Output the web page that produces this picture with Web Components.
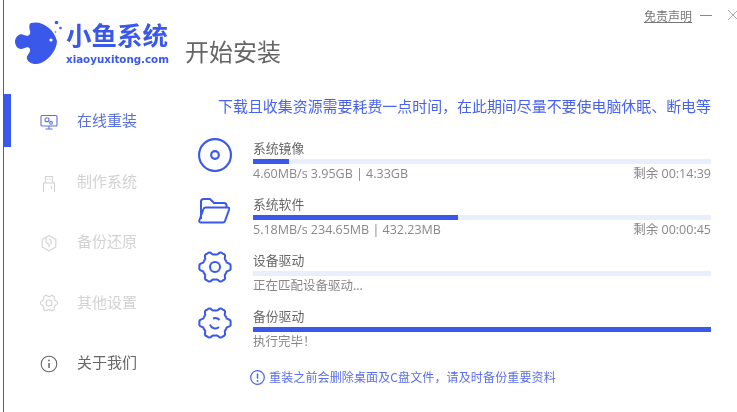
<!DOCTYPE html>
<html lang="zh">
<head>
<meta charset="utf-8">
<title>小鱼系统</title>
<style>
html, body { margin: 0; padding: 0; background: #fff; overflow: hidden; }
</style>
</head>
<body>
<install-app>
  <brand-logo slot="logo"></brand-logo>

  <nav-item slot="nav" active label="在线重装">
    <svg viewBox="0 0 18 18" width="18" height="18" fill="none" stroke="currentColor" stroke-width="1.1">
      <rect x="1" y="2.5" width="16" height="10.5" rx="1"/>
      <circle cx="7" cy="6.8" r="2"/><circle cx="11" cy="9.8" r="1.4"/>
      <path d="M9 13v3M5.5 16h7"/>
    </svg>
  </nav-item>
  <nav-item slot="nav" label="制作系统" muted>
    <svg viewBox="0 0 18 18" width="18" height="18" fill="none" stroke="currentColor" stroke-width="1.1">
      <path d="M5.500 2.500h7V9h-7zM3.500 9h11v10h-11z"/><path d="M7.800 4.500v1.500M10.200 4.500v1.500M11.500 12v3"/>
    </svg>
  </nav-item>
  <nav-item slot="nav" label="备份还原" muted>
    <svg viewBox="0 0 18 18" width="18" height="18" fill="none" stroke="currentColor" stroke-width="1.1">
      <path d="M6 3.200 9 1.500l6.800 3.800v7.600L9 16.900l-6.800-3.900V5.600L6 3.200z"/>
      <path d="M6 3.200v5.200l3 1.800v3M11.200 6.400v4M9 5l2.200 1.400"/>
    </svg>
  </nav-item>
  <nav-item slot="nav" label="其他设置" muted>
    <gear-icon size="18" width="1.1" inner="3"></gear-icon>
  </nav-item>
  <nav-item slot="nav" label="关于我们" about>
    <svg viewBox="0 0 18 18" width="18" height="18" fill="none" stroke="currentColor" stroke-width="1.1">
      <circle cx="9" cy="9" r="7.800"/>
      <path d="M9 8v5" stroke-width="1.500"/><circle cx="9" cy="5.400" r=".9" fill="currentColor" stroke="none"/>
    </svg>
  </nav-item>

  <progress-row slot="rows" label="系统镜像" stats="4.60MB/s 3.95GB | 4.33GB" remain="剩余 00:14:39" value="36">
    <svg slot="icon" viewBox="0 0 32 32" width="34" height="34" fill="none" stroke="currentColor" stroke-width="2">
      <circle cx="16" cy="16" r="15"/><circle cx="16" cy="16" r="3.600"/>
    </svg>
  </progress-row>
  <progress-row slot="rows" label="系统软件" stats="5.18MB/s 234.65MB | 432.23MB" remain="剩余 00:00:45" value="205">
    <svg slot="icon" viewBox="0 0 32 26" width="32" height="26" fill="none" stroke="currentColor" stroke-width="2" stroke-linejoin="round">
      <path d="M3 21V3.500C3 2 4 1 5.500 1h6.500l4 4h10c1.500 0 2.500 1 2.500 2.500V9"/>
      <path d="M7.500 9.500H30c1 0 1.500.8 1.200 1.800L27 23c-.3.900-1 1.500-2 1.500H3c-1.300 0-2-1-1.700-2L5.500 11c.3-1 1-1.500 2-1.500z"/>
    </svg>
  </progress-row>
  <progress-row slot="rows" label="设备驱动" stats="正在匹配设备驱动..." value="0">
    <gear-icon slot="icon" size="34" width="2" inner="5"></gear-icon>
  </progress-row>
  <progress-row slot="rows" label="备份驱动" stats="执行完毕！" value="458">
    <gear-icon slot="icon" size="34" width="2" inner="5" broken></gear-icon>
  </progress-row>
</install-app>

<script>
class GearIcon extends HTMLElement {
  connectedCallback() {
    const size = +this.getAttribute('size');
    const c = size / 2;
    const R = size * 0.415, a = size * 0.055;
    let d = '';
    // wavy six lobe outline, second harmonic flattens the lobes
    for (let i = 0; i <= 180; i++) {
      const t = i / 180 * Math.PI * 2;
      const r = R + a * Math.cos(6 * t) - a * 0.22 * Math.cos(18 * t);
      d += (i ? 'L' : 'M') + (c + r * Math.cos(t)).toFixed(2) + ' ' + (c + r * Math.sin(t)).toFixed(2);
    }
    const inner = +this.getAttribute('inner');
    const w = this.getAttribute('width');
    // broken gear: two short arcs of the inner ring
    const middle = this.hasAttribute('broken')
      ? `<path d="M${c - 5} ${c + 1.500}a5.500 5.500 0 0 0 9 2.500M${c + 4.500} ${c - 3}a5.500 5.500 0 0 0 -6.500 -1.500"/>`
      : `<circle cx="${c}" cy="${c}" r="${inner}"/>`;
    this.attachShadow({ mode: 'open' }).innerHTML = `
      <style>:host { display: block; width: ${size}px; height: ${size}px; } svg { display: block; }</style>
      <svg viewBox="0 0 ${size} ${size}" width="${size}" height="${size}" fill="none" stroke="currentColor" stroke-width="${w}">
        <path d="${d}Z" stroke-linejoin="round"/>${middle}
      </svg>`;
  }
}
customElements.define('gear-icon', GearIcon);

const logoTemplate = document.createElement('template');
logoTemplate.innerHTML = `
<style>
:host { display: flex; height: 91px; padding: 20px 0 0 10px; box-sizing: border-box; color: #3a58ea; font-family: "Noto Sans CJK SC", sans-serif; }
svg { flex: none; display: block; }
.words { filter: blur(.3px); }
.name { font-family: "Liberation Sans", "Noto Sans CJK SC", sans-serif; font-size: 25.500px; font-weight: 700; line-height: 29px; height: 31px; padding-top: 2px; white-space: nowrap; }
.url { font-family: "DejaVu Sans", sans-serif; font-size: 10.300px; font-weight: 700; line-height: 12px; white-space: nowrap; }
</style>
<svg viewBox="0 0 52 48" width="52" height="48">
  <path fill="currentColor" d="M17 3C28 0 40 9 43 21 43 29 36 39 27 43 22 45 15 44 13 39 12 35 17 33 16 29 14 25 10 29 7 29 3 29 1 25 1 21 2 16 6 13 10 15 14 17 17 15 16 11 15 7 15 4 17 3Z"/>
  <circle cx="37" cy="20" r="1.600" fill="#fff"/>
  <circle cx="42.500" cy="2.500" r="1.800" fill="currentColor"/>
  <circle cx="46.500" cy="8" r="1.300" fill="currentColor"/>
  <circle cx="41.500" cy="12" r=".8" fill="currentColor"/>
</svg>
<div class="words">
  <div class="name">小鱼系统</div>
  <div class="url">xiaoyuxitong.com</div>
</div>`;

class BrandLogo extends HTMLElement {
  constructor() {
    super();
    this.attachShadow({ mode: 'open' }).appendChild(logoTemplate.content.cloneNode(true));
  }
}
customElements.define('brand-logo', BrandLogo);

const navTemplate = document.createElement('template');
navTemplate.innerHTML = `
<style>
:host { display: flex; align-items: center; height: 60.500px; padding-left: 36px; position: relative; color: #5a70dc; }
:host([muted]) { color: #d2d2d2; }
:host([about]) { color: #666; }
:host([active])::before { content: ""; position: absolute; left: 0; top: 3px; width: 7px; height: 53px; background: #3a58ea; }
.icon { width: 18px; height: 18px; flex: none; display: block; }
.label { margin: -2px 0 0 19px; font-size: 15px; line-height: 20px; white-space: nowrap; filter: blur(.3px); }
</style>
<div class="icon"><slot></slot></div>
<span class="label"></span>`;

class NavItem extends HTMLElement {
  constructor() {
    super();
    this.attachShadow({ mode: 'open' }).appendChild(navTemplate.content.cloneNode(true));
    this.shadowRoot.querySelector('.label').textContent = this.getAttribute('label');
  }
}
customElements.define('nav-item', NavItem);

const rowTemplate = document.createElement('template');
rowTemplate.innerHTML = `
<style>
:host { display: flex; height: 56px; color: #3a58ea; }
.icon { width: 67px; flex: none; padding: 0 0 0 12px; box-sizing: border-box; height: 34px; margin-top: -1px; display: flex; align-items: center; }
.body { width: 458px; flex: none; }
.label { font-size: 12.800px; line-height: 18px; height: 20px; color: #666; filter: blur(.3px); }
.track { height: 5px; background: #e8eefb; }
.fill { height: 100%; background: #3a58ea; }
.info { display: flex; justify-content: space-between; font-family: "Open Sans", "Noto Sans CJK SC", sans-serif; font-size: 12.500px; line-height: 20px; color: #888; white-space: nowrap; filter: blur(.3px); }
</style>
<div class="icon"><slot name="icon"></slot></div>
<div class="body">
  <div class="label"></div>
  <div class="track"><div class="fill"></div></div>
  <div class="info"><span class="stats"></span><span class="remain"></span></div>
</div>`;

class ProgressRow extends HTMLElement {
  constructor() {
    super();
    this.attachShadow({ mode: 'open' }).appendChild(rowTemplate.content.cloneNode(true));
    const root = this.shadowRoot;
    root.querySelector('.label').textContent = this.getAttribute('label');
    root.querySelector('.stats').textContent = this.getAttribute('stats');
    root.querySelector('.remain').textContent = this.getAttribute('remain') || '';
    root.querySelector('.fill').style.width = this.getAttribute('value') + 'px';
  }
}
customElements.define('progress-row', ProgressRow);

const appTemplate = document.createElement('template');
appTemplate.innerHTML = `
<style>
:host { display: flex; width: 737px; height: 412px; overflow: hidden; padding-left: 3px; box-sizing: border-box; background: #fff;
  font-family: "Noto Sans CJK SC", "Noto Sans", sans-serif; }
.side { width: 183px; flex: none; box-sizing: border-box; border-left: 1px solid #3a58ea; }
.main { flex: 1; min-width: 0; display: flex; flex-direction: column; }
.top { display: flex; justify-content: flex-end; align-items: center; height: 30px; color: #777; font-size: 12px; }
.top a { color: #777; text-decoration: underline; margin-right: 8px; filter: blur(.3px); }
.top svg { display: block; flex: none; }
.top .min { margin-right: 16px; }
.top .close { margin-right: -1px; }
h1 { margin: 0 0 0 -1px; font-size: 24px; font-weight: 400; line-height: 42px; height: 44px; color: #666; filter: blur(.3px); }
.notice { margin: 20px 26px 21px 0; text-align: right; font-size: 14.950px; line-height: 24px; color: #4a63ee; white-space: nowrap; filter: blur(.3px); }
.foot { display: flex; align-items: center; margin: 4px 0 0 64px; height: 20px; font-size: 12px; color: #5a6fe8; white-space: nowrap; }
.foot svg { margin-right: 4px; flex: none; }
.foot span { margin-top: -2px; letter-spacing: .13px; filter: blur(.3px); }
</style>
<div class="side">
  <slot name="logo"></slot>
  <slot name="nav"></slot>
</div>
<div class="main">
  <div class="top">
    <a>免责声明</a>
    <svg class="min" width="12" height="12" viewBox="0 0 12 12" stroke="#888"><path d="M0 6.500h12"/></svg>
    <svg class="close" width="10" height="12" viewBox="0 0 10 12" fill="none" stroke="#aaa"><path d="M0 1l10 10M10 1 0 11"/></svg>
  </div>
  <h1>开始安装</h1>
  <div class="notice">下载且收集资源需要耗费一点时间，在此期间尽量不要使电脑休眠、断电等</div>
  <slot name="rows"></slot>
  <div class="foot">
    <svg width="15" height="15" viewBox="0 0 15 15" fill="none" stroke="#4a63ee" stroke-width="1.200">
      <circle cx="7.500" cy="7.500" r="6.800"/><path d="M7.500 3.500v5.200" stroke-width="1.500"/><circle cx="7.500" cy="11" r=".9" fill="#4a63ee" stroke="none"/>
    </svg>
    <span>重装之前会删除桌面及C盘文件，请及时备份重要资料</span>
  </div>
</div>`;

class InstallApp extends HTMLElement {
  constructor() {
    super();
    this.attachShadow({ mode: 'open' }).appendChild(appTemplate.content.cloneNode(true));
  }
}
customElements.define('install-app', InstallApp);
</script>
</body>
</html>
